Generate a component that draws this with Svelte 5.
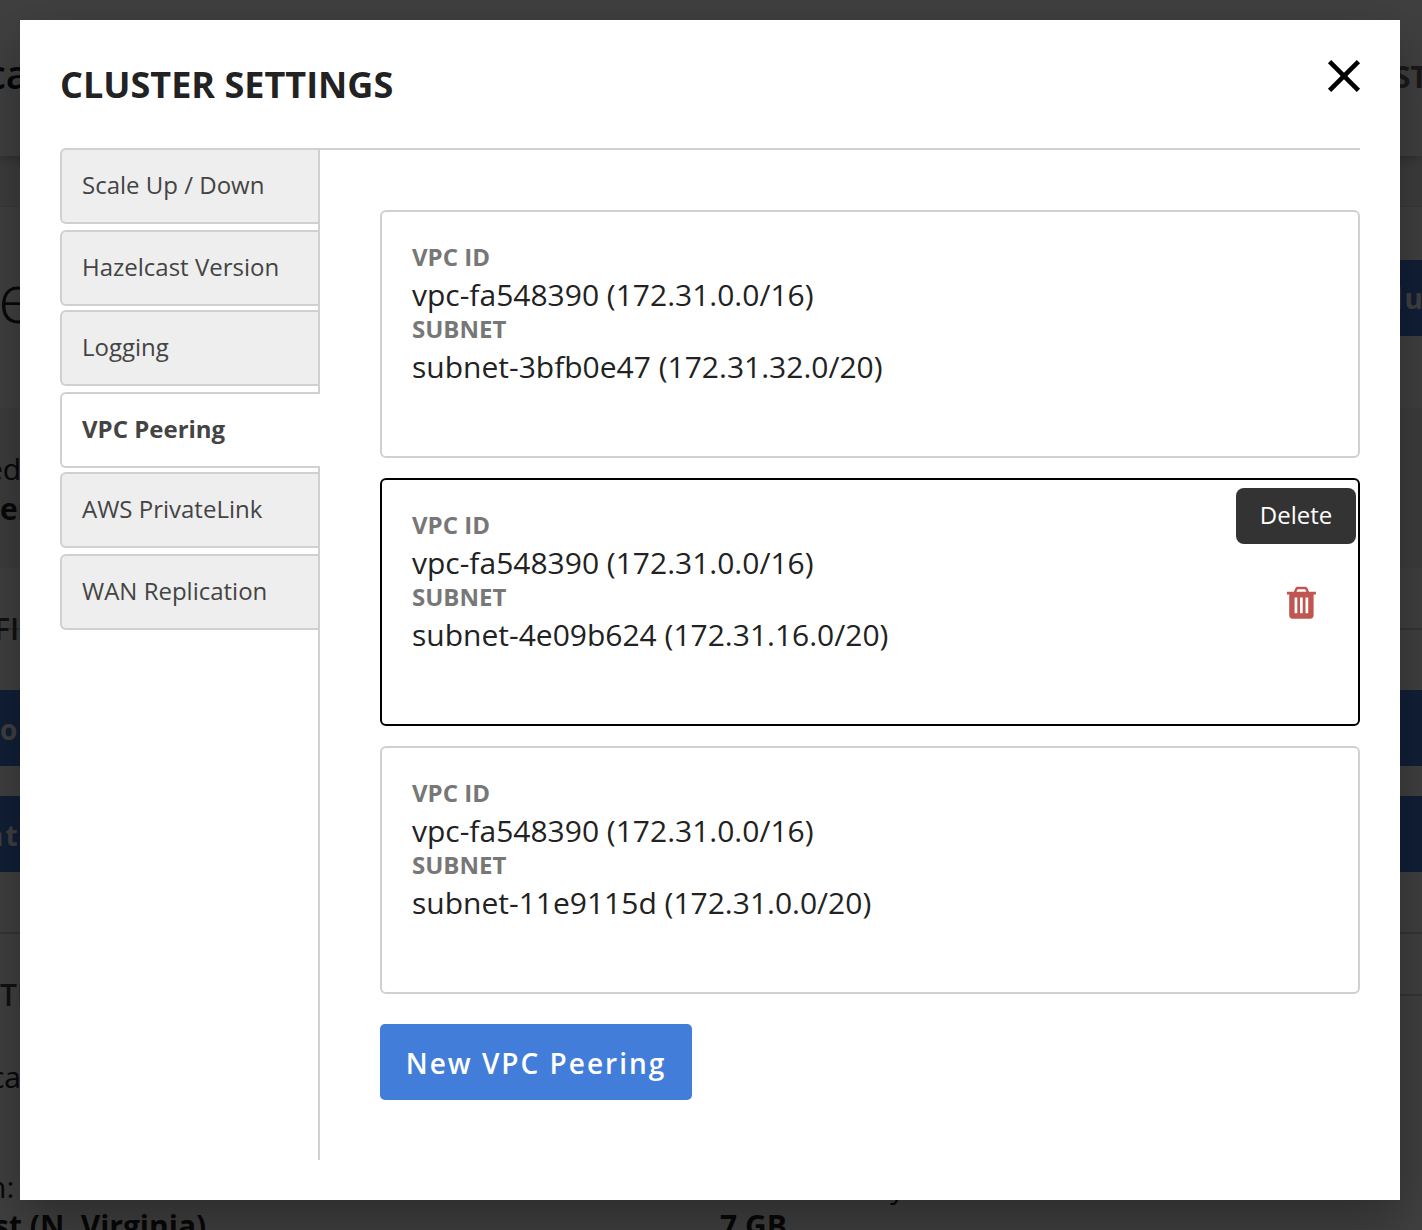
<script lang="ts">
  const tabs = ['Scale Up / Down', 'Hazelcast Version', 'Logging', 'VPC Peering', 'AWS PrivateLink', 'WAN Replication'];
  let active = $state('VPC Peering');

  const vpc = 'vpc-fa548390 (172.31.0.0/16)';
  const peerings = [
    { subnet: 'subnet-3bfb0e47 (172.31.32.0/20)', hovered: false },
    { subnet: 'subnet-4e09b624 (172.31.16.0/20)', hovered: true },
    { subnet: 'subnet-11e9115d (172.31.0.0/20)', hovered: false },
  ];
</script>

<div class="screen">
  <div class="page" aria-hidden="true">
    <header class="topbar"><span class="brand">ca</span><span class="cost">ST</span></header>
    <div class="gap"></div>
    <section class="heading"><span class="name">e</span><span class="btn side">lu</span></section>
    <section class="status"><span>ed</span><b>er</b></section>
    <section class="config"><span>FIG</span></section>
    <section class="actions">
      <div class="btn wide">o</div>
      <div class="btn wide second">nt</div>
    </section>
    <section class="caption"><span>TI</span><i class="rule"></i></section>
    <section class="details">
      <div class="cell text">ca</div>
      <div class="pair"><span>n:</span><span class="memory">Memory</span></div>
      <div class="pair strong"><span>st (N. Virginia)</span><span class="size">7 GB</span></div>
    </section>
  </div>

  <div class="backdrop">
    <div class="modal" role="dialog" aria-label="Cluster settings">
      <div class="title-row">
        <h1>CLUSTER SETTINGS</h1>
        <button class="close" aria-label="Close">
          <svg width="34" height="34" viewBox="0 0 34 34"><path d="M2.6 2.6 31.4 31.4M31.4 2.6 2.6 31.4" fill="none" stroke="#000" stroke-width="4.7" /></svg>
        </button>
      </div>
      <div class="body">
        <nav>
          {#each tabs as tab}
            <button class="tab" class:active={active === tab} onclick={() => (active = tab)}>{tab}</button>
          {/each}
        </nav>
        <main>
          {#each peerings as p}
            <article class="card" class:hovered={p.hovered}>
              <dl>
                <dt>VPC ID</dt>
                <dd>{vpc}</dd>
                <dt>SUBNET</dt>
                <dd>{p.subnet}</dd>
              </dl>
              {#if p.hovered}
                <button class="trash" aria-label="Delete peering">
                  <svg width="30" height="34" viewBox="0 0 30 34">
                    <path fill="#c0564f" fill-rule="evenodd" d="M.9 5.8H7.8L9.2 2.6C9.8 1.3 10.6.7 11.9.7H18.9C20.2.7 21 1.3 21.6 2.6L23 5.8H29.9V8.4H27.6V29.2C27.6 31.5 26.4 32.7 24.2 32.7H6.6C4.4 32.7 3.2 31.5 3.2 29.2V8.4H.9ZM10.4 5.8H20.4L19.6 4C19.4 3.4 19.1 3.2 18.6 3.2H12.2C11.7 3.2 11.4 3.4 11.2 4ZM8.6 11.6V27.2H11.3V11.6ZM14 11.6V27.2H16.7V11.6ZM19.5 11.6V27.2H22.2V11.6Z" />
                  </svg>
                </button>
                <span class="tooltip">Delete</span>
              {/if}
            </article>
          {/each}
          <button class="primary">New VPC Peering</button>
        </main>
      </div>
    </div>
  </div>
</div>

<style>
  :global(body) { background: #fff; }
  .screen, .screen * { box-sizing: border-box; }
  .screen { position: relative; width: 1422px; height: 1230px; overflow: hidden; font-family: 'Open Sans', 'Noto Sans', sans-serif; color: #222; }
  button { font: inherit; border: 0; margin: 0; padding: 0; background: none; text-align: left; }

  .page { display: flex; flex-direction: column; height: 1230px; overflow: hidden; background: #fff; white-space: nowrap; font-size: 30px; line-height: 40px; }
  .page section, .topbar { flex: none; display: flex; }
  .topbar { height: 156px; padding-top: 49px; justify-content: space-between; box-shadow: 0 0 14px rgba(0, 0, 0, 0.35); position: relative; }
  .brand { font-size: 40px; line-height: 50px; font-weight: 600; color: #0e1a2b; margin-left: -14px; }
  .cost { font-size: 30px; line-height: 56px; font-weight: 700; color: #666; margin-right: -6px; }
  .gap { flex: none; height: 50px; background: #f3f3f3; }
  .page .heading { height: 202px; border-top: 1px solid #e4e4e4; justify-content: space-between; align-items: flex-start; }
  .name { font-size: 68px; line-height: 80px; font-weight: 300; margin: 50px 0 0 -2px; }
  .btn { background: #437dda; color: #fff; font-weight: 700; letter-spacing: 2px; }
  .side { height: 76px; width: 33px; line-height: 76px; margin-top: 53px; padding-left: 5px; font-size: 28px; }
  .page .status { height: 160px; background: #f1f1f1; flex-direction: column; padding-top: 41px; }
  .status span { margin-left: -14px; }
  .page .config { height: 62px; border-bottom: 2px solid #d0d0d0; padding-top: 41px; color: #444; font-weight: 600; }
  .config span { margin-left: -6px; }
  .page .actions { height: 304px; border-bottom: 2px solid #d0d0d0; flex-direction: column; padding-top: 60px; gap: 30px; }
  .wide { height: 76px; line-height: 78px; font-size: 28px; }
  .second { text-indent: -15px; }
  .page .caption { height: 62px; padding-top: 41px; color: #444; font-weight: 600; justify-content: space-between; }
  .rule { width: 700px; height: 2px; margin-top: 19px; background: #d0d0d0; }
  .page .details { flex-direction: column; padding-top: 61px; }
  .cell { margin-left: -10px; height: 110px; }
  .pair { display: flex; height: 39px; }
  .pair > span:first-child { width: 720px; margin-left: -12px; flex: none; }
  .pair .memory { margin-left: 80px; }
  .strong { font-weight: 700; }
  .pair.strong > span:first-child { margin-left: -6px; }
  .size { margin-left: 6px; }

  .backdrop { position: absolute; inset: 0; background: rgba(0, 0, 0, 0.75); padding: 20px 22px 30px 20px; }
  .modal { height: 1180px; background: #fff; padding: 40px; box-shadow: 0 20px 50px rgba(0, 0, 0, 0.32); display: flex; flex-direction: column; }
  .title-row { display: flex; justify-content: space-between; height: 88px; flex: none; }
  h1 { margin: 0; font-size: 36px; line-height: 50px; font-weight: 700; color: #222; }
  .close { width: 34px; height: 34px; margin: -1px -1px 0 0; }
  .close svg, .trash svg { display: block; }
  .body { display: flex; flex: 1; }
  nav { width: 260px; display: flex; flex-direction: column; background: linear-gradient(#d0d0d0, #d0d0d0) right / 2px 100% no-repeat; }
  .tab { flex: none; height: 76px; margin-bottom: 6px; margin-right: 2px; padding-left: 20px; border: 2px solid #d0d0d0; border-right: 0; border-radius: 6px 0 0 6px; background: #eee; font-size: 24px; line-height: 70px; padding-bottom: 2px; color: #444; }
  .tab:nth-child(even) { margin-bottom: 4px; }
  .tab.active { background: #fff; font-weight: 700; margin-right: 0; border-radius: 6px 2px 2px 6px; }
  main { flex: 1; padding: 60px 0 0 60px; border-top: 2px solid #d0d0d0; }
  .card { position: relative; height: 248px; padding: 28px 30px; margin-bottom: 20px; border: 2px solid #d0d0d0; border-radius: 6px; display: flex; justify-content: space-between; }
  .hovered { border-color: #000; }
  dl { margin: 0; }
  dt { font-size: 24px; line-height: 34px; height: 34px; font-weight: 700; color: #777; }
  dd { margin: 0; font-size: 30px; line-height: 42px; height: 38px; color: #222; }
  .trash { width: 30px; height: 34px; margin: 78px 12px 0 0; }
  .tooltip { position: absolute; top: 8px; right: 2px; width: 120px; height: 56px; border-radius: 8px; background: #333; color: #fff; font-size: 24px; line-height: 54px; text-align: center; }
  .primary { display: block; width: 312px; height: 76px; margin-top: 30px; border-radius: 5px; background: #437dda; color: #fff; font-size: 28px; line-height: 78px; font-weight: 600; letter-spacing: 2px; text-align: center; }
</style>
